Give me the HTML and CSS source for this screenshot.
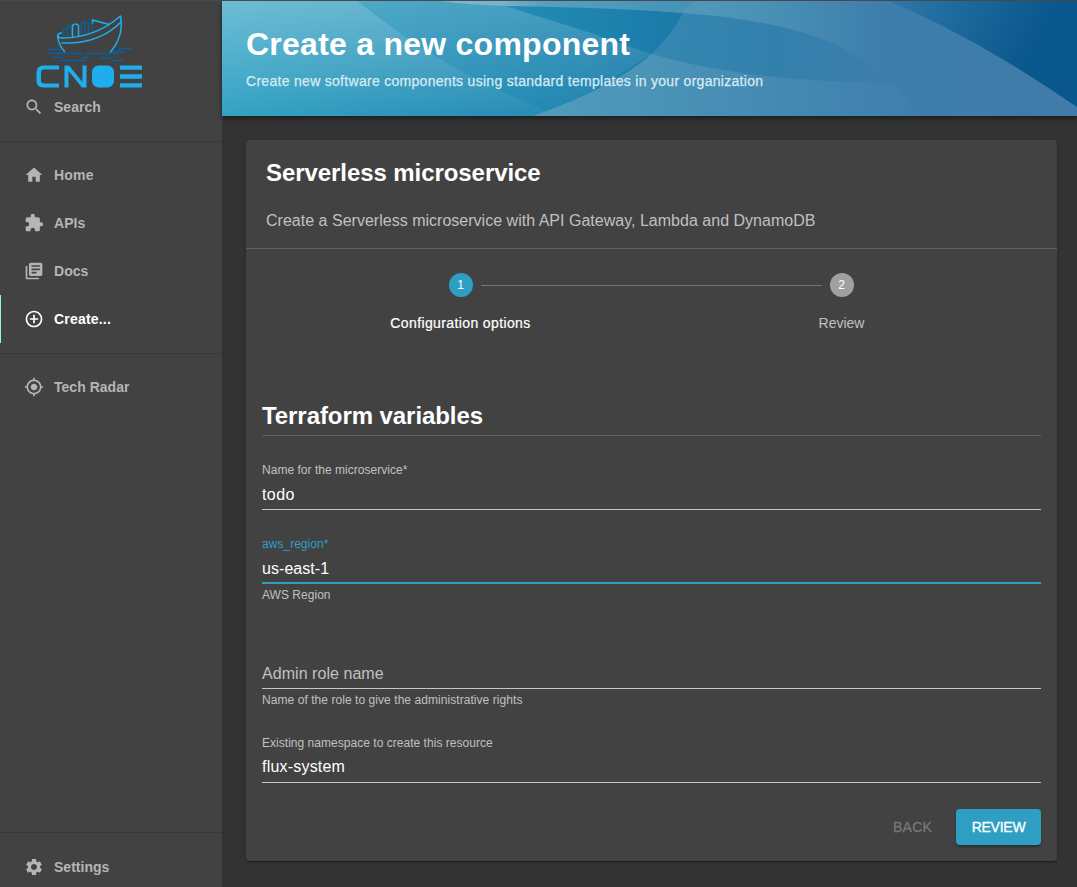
FILE: index.html
```
<!DOCTYPE html>
<html lang="en">
<head>
<meta charset="utf-8">
<title>Create a new component</title>
<link rel="stylesheet" href="styles.css">
</head>
<body>
<div class="app">
  <nav class="sidebar">
    <svg class="logo" width="110" height="76" viewBox="0 0 110 76" fill="none">
      <g stroke="#07619e" stroke-width="1.3">
        <path d="M11 34.500h14M13 38.500h34M51 38.500h32M16 42.500h11.500M23 45.500h27.500M45.500 42.500h7.500M64 43h13M82 33.500h13.500M75 36.500h13M76 45.500h11"/>
        <path d="M27.500 21v-7h3.500M31.500 21v-10.500h3.500V21M45.500 19V8.500l3-2 4 2V18M49 7v12M52.500 8l4 2v7"/>
      </g>
      <g stroke="#1eaeee" stroke-width="1.5" stroke-linejoin="round" stroke-linecap="round">
        <path d="M28.500 36.500C23.500 31 22 26 21.500 20.500q1-2.500 4-2.500M21.500 20.500q1 2.500 4.500 2.500c20 0 40-6 58.500-22 2.500 14-.5 25-10 36M26 28c22 1 43-5 59-21M36.500 22V10.500q3-3 6 0V21M56.500 8V5l17 4.500"/>
      </g>
      <g fill="#1eaeee">
        <path d="M23 50.500H7.500Q0.500 50.500 0.500 57.500V65.500Q0.500 72.500 7.500 72.500H23V68.500H8Q5 68.500 5 65.500V57.500Q5 54.500 8 54.500H23Z"/>
        <path d="M28.500 72.500v-22h4.500l13.500 16.500v-16.500h4v22h-4.500L32.500 56v16.500Z"/>
        <rect x="56" y="50.500" width="22" height="22" rx="6.500"/>
        <path d="M84 50.500h22v4.300H84zM84 59.300h22v4.400H84zM84 68.200h22v4.300H84z"/>
      </g>
    </svg>
    <a class="item search"><svg class="icon" viewBox="0 0 24 24"><path d="M15.500 14h-.79l-.28-.27C15.410 12.590 16 11.110 16 9.500 16 5.910 13.090 3 9.500 3S3 5.910 3 9.500 5.910 16 9.500 16c1.610 0 3.090-.59 4.230-1.570l.27.28v.79l5 4.990L20.490 19l-4.990-5zm-6 0C7.010 14 5 11.990 5 9.500S7.010 5 9.500 5 14 7.010 14 9.500 11.990 14 9.500 14z"/></svg><span class="tight">Search</span></a>
    <hr class="rule first">
    <a class="item"><svg class="icon" viewBox="0 0 24 24"><path d="M10 20v-6h4v6h5v-8h3L12 3 2 12h3v8z"/></svg><span>Home</span></a>
    <a class="item"><svg class="icon" viewBox="0 0 24 24"><path d="M20.500 11H19V7c0-1.100-.9-2-2-2h-4V3.500C13 2.120 11.880 1 10.500 1S8 2.120 8 3.500V5H4c-1.100 0-1.990.9-1.990 2v3.800H3.500c1.490 0 2.700 1.210 2.700 2.700s-1.210 2.700-2.700 2.700H2V20c0 1.100.9 2 2 2h3.800v-1.500c0-1.490 1.210-2.700 2.700-2.700 1.490 0 2.700 1.210 2.700 2.700V22H17c1.100 0 2-.9 2-2v-4h1.500c1.380 0 2.500-1.120 2.500-2.500S21.880 11 20.500 11z"/></svg><span class="tight">APIs</span></a>
    <a class="item"><svg class="icon" viewBox="0 0 24 24"><path d="M4 6H2v14c0 1.100.9 2 2 2h14v-2H4V6zm16-4H8c-1.100 0-2 .9-2 2v12c0 1.100.9 2 2 2h12c1.100 0 2-.9 2-2V4c0-1.100-.9-2-2-2zm-1 9H9V9h10v2zm-4 4H9v-2h6v2zm4-8H9V5h10v2z"/></svg><span class="tight">Docs</span></a>
    <a class="item active"><svg class="icon" viewBox="0 0 24 24"><path d="M13 7h-2v4H7v2h4v4h2v-4h4v-2h-4V7zm-1-5C6.480 2 2 6.480 2 12s4.480 10 10 10 10-4.480 10-10S17.520 2 12 2zm0 18c-4.410 0-8-3.590-8-8s3.590-8 8-8 8 3.590 8 8-3.590 8-8 8z"/></svg><span>Create...</span></a>
    <hr class="rule second">
    <a class="item"><svg class="icon" viewBox="0 0 24 24"><path d="M12 8c-2.210 0-4 1.790-4 4s1.790 4 4 4 4-1.790 4-4-1.790-4-4-4zm8.940 3c-.46-4.170-3.770-7.480-7.940-7.940V1h-2v2.060C6.830 3.520 3.520 6.830 3.060 11H1v2h2.060c.46 4.170 3.770 7.480 7.940 7.940V23h2v-2.060c4.170-.46 7.480-3.770 7.940-7.940H23v-2h-2.060zM12 19c-3.870 0-7-3.130-7-7s3.130-7 7-7 7 3.130 7 7-3.130 7-7 7z"/></svg><span class="tight">Tech Radar</span></a>
    <div class="spacer"></div>
    <hr class="rule third">
    <a class="item settings"><svg class="icon" viewBox="0 0 24 24"><path d="M19.140 12.940c.04-.3.06-.61.06-.94 0-.32-.02-.64-.07-.94l2.030-1.580c.18-.14.23-.41.12-.61l-1.920-3.320c-.12-.22-.37-.29-.59-.22l-2.390.96c-.5-.38-1.030-.7-1.620-.94l-.36-2.540c-.04-.24-.24-.41-.48-.41h-3.840c-.24 0-.43.17-.47.41l-.36 2.540c-.59.24-1.130.57-1.620.94l-2.390-.96c-.22-.08-.47 0-.59.22L2.740 8.870c-.12.21-.08.47.12.61l2.030 1.580c-.05.3-.09.63-.09.94s.02.64.07.94l-2.030 1.580c-.18.14-.23.41-.12.61l1.920 3.320c.12.22.37.29.59.22l2.390-.96c.5.38 1.030.7 1.620.94l.36 2.540c.05.24.24.41.48.41h3.840c.24 0 .44-.17.47-.41l.36-2.540c.59-.24 1.130-.56 1.620-.94l2.390.96c.22.08.47 0 .59-.22l1.920-3.320c.12-.22.07-.47-.12-.61l-2.010-1.580zM12 15.600c-1.980 0-3.600-1.620-3.600-3.600s1.620-3.600 3.600-3.600 3.600 1.620 3.600 3.600-1.620 3.600-3.600 3.600z"/></svg><span class="tight">Settings</span></a>
  </nav>
  <main class="main">
    <header class="header">
      <svg class="waves" viewBox="0 0 855 115" preserveAspectRatio="none">
        <defs>
          <linearGradient id="base" gradientUnits="userSpaceOnUse" x1="0" y1="60" x2="500" y2="60">
            <stop offset="0" stop-color="#2da0c3"/><stop offset=".7" stop-color="#2086b0"/><stop offset="1" stop-color="#1875a5"/>
          </linearGradient>
          <linearGradient id="down" gradientUnits="userSpaceOnUse" x1="0" y1="0" x2="0" y2="115"><stop offset="0" stop-color="#fff" stop-opacity=".18"/><stop offset="1" stop-color="#fff" stop-opacity="0"/></linearGradient>
          <linearGradient id="left" x1="0" y1="0" x2="0" y2="1"><stop offset="0" stop-color="#fff" stop-opacity=".15"/><stop offset="1" stop-color="#fff" stop-opacity=".03"/></linearGradient>
          <linearGradient id="strip" gradientUnits="userSpaceOnUse" x1="217" y1="0" x2="471" y2="0"><stop offset="0" stop-color="#78b8d0"/><stop offset=".25" stop-color="#78b3cc"/><stop offset=".4" stop-color="#56a1c0"/><stop offset="1" stop-color="#4492b9"/></linearGradient>
          <linearGradient id="band" gradientUnits="userSpaceOnUse" x1="420" y1="0" x2="855" y2="0"><stop offset="0" stop-color="#559dbb"/><stop offset=".3" stop-color="#4a90b5"/><stop offset=".55" stop-color="#3d7eac"/><stop offset="1" stop-color="#417ba9"/></linearGradient>
          <linearGradient id="low" gradientUnits="userSpaceOnUse" x1="311" y1="0" x2="680" y2="0"><stop offset="0" stop-color="#519cbc"/><stop offset=".6" stop-color="#468bb3"/><stop offset="1" stop-color="#3f80ad"/></linearGradient>
          <linearGradient id="lens" gradientUnits="userSpaceOnUse" x1="430" y1="50" x2="665" y2="80"><stop offset="0" stop-color="#3488b1"/><stop offset=".5" stop-color="#3380ad"/><stop offset="1" stop-color="#3d7eac"/></linearGradient>
          <linearGradient id="corner" gradientUnits="userSpaceOnUse" x1="666" y1="0" x2="805" y2="65"><stop offset="0" stop-color="#2e78a8"/><stop offset="1" stop-color="#0a578d"/></linearGradient>
        </defs>
        <path fill="url(#base)" d="M0 0h855v115H0z"/>
        <path fill="url(#left)" d="M0 0H135C195 47 255 85 340 115H0z"/>
        <path fill="url(#down)" d="M0 0H268L378 35Q405 45 430 53L390 78Q355 99 311 115H0z"/>
        <path fill="url(#corner)" d="M660 0h195v115H660z"/>
        <path fill="url(#band)" d="M471 0H666C750 35 815 79 855 106V115H430V7z"/>
        <path fill="url(#lens)" d="M430 53Q451 32 461 12C580 21 630 45 674 83L655 88 430 70z"/>
        <path fill="url(#low)" d="M311 115Q390 87 430 53C500 74 580 80 671 83Q684 94 692 115z"/>
        <path fill="url(#base)" d="M418 9Q442 10 461 12 451 32 430 53L418 49z"/>
        <path fill="url(#strip)" d="M143 0H471L461 12Q420 8 311 5.500 255 5 217 0z"/>
      </svg>
      <h1>Create a new component</h1>
      <p>Create new software components using standard templates in your organization</p>
    </header>
    <section class="card">
      <div class="card-head">
        <h2>Serverless microservice</h2>
        <p>Create a Serverless microservice with API Gateway, Lambda and DynamoDB</p>
      </div>
      <div class="stepper">
        <div class="step on"><b>1</b><span>Configuration options</span></div>
        <i class="line"></i>
        <div class="step"><b>2</b><span>Review</span></div>
      </div>
      <div class="form">
        <h2 class="form-title">Terraform variables</h2>
        <div class="field name"><label>Name for the microservice*</label><div class="value todo">todo</div></div>
        <div class="field region"><label>aws_region*</label><div class="value">us-east-1</div><small>AWS Region</small></div>
        <div class="field role"><div class="value">Admin role name</div><small class="hint">Name of the role to give the administrative rights</small></div>
        <div class="field space"><label>Existing namespace to create this resource</label><div class="value">flux-system</div></div>
        <div class="actions"><button class="back">BACK</button><button class="review">REVIEW</button></div>
      </div>
    </section>
  </main>
</div>
</body>
</html>
```
FILE: styles.css
```
* { box-sizing: border-box; }
body { margin: 0; background: #333; color: #fff; font-family: "Liberation Sans", Arial, sans-serif; }
h1, h2, p { margin: 0; }
.app { display: flex; height: 887px; border-top: 1px solid #494949; overflow: hidden; }
.sidebar { width: 222px; background: #424242; display: flex; flex-direction: column; }
.logo { display: block; margin: 14px 0 0 36px; flex: none; }
.item { display: flex; align-items: center; flex: none; height: 48px; padding-left: 24px; gap: 10px; color: #b5b5b5; font-size: 14px; font-weight: 700; letter-spacing: .2px; line-height: 20px; border-left: 0 solid #9bf0e1; }
.tight { letter-spacing: .02px; }
.item.search { height: 32px; }
.icon { width: 20px; height: 20px; fill: currentColor; }
.item.active { color: #fff; border-left-width: 1px; padding-left: 23px; }
.rule { width: 100%; height: 1px; margin: 0; border: 0; background: #383838; flex: none; }
.first { margin: 18px 0 9px; }
.second { margin: 10px 0 9px; }
.spacer { flex: 1; }
.third { margin-bottom: 10px; }
.settings { height: 44px; padding-top: 4px; }
.main { flex: 1; }
.header { position: relative; height: 115px; padding: 24px 24px 0; box-shadow: 0 2px 5px rgba(0,0,0,.5); }
.waves { position: absolute; left: 0; top: 0; width: 100%; height: 100%; }
.header h1, .header p { position: relative; white-space: nowrap; }
.header h1 { font-size: 32px; line-height: 38px; letter-spacing: .25px; }
.header p { margin-top: 8px; font-size: 14px; line-height: 20px; color: #d7ebf3; letter-spacing: .295px; -webkit-text-stroke: .25px #d7ebf3; }
.card { margin: 24px 20px 0 24px; height: 721px; background: #424242; border-radius: 4px; box-shadow: 0 2px 1px -1px rgba(0,0,0,.3), 0 1px 3px rgba(0,0,0,.2); }
.card-head { height: 109px; padding: 18px 20px 0; border-bottom: 1px solid #616161; }
h2 { font-size: 24px; line-height: 29px; letter-spacing: -.07px; }
.card-head p { margin-top: 22px; font-size: 16px; line-height: 24px; color: #c0c0c0; white-space: nowrap; letter-spacing: .015px; }
.stepper { display: flex; padding-top: 24px; height: 134px; }
.step { width: 141px; margin-left: 144px; display: flex; flex-direction: column; align-items: center; color: #c0c0c0; font-size: 14px; white-space: nowrap; }
.step b { width: 24px; height: 24px; border-radius: 50%; background: #a0a0a0; color: #fff; font-size: 12px; font-weight: 400; line-height: 24px; text-align: center; }
.step span { margin-top: 16px; line-height: 20px; }
.on { color: #fff; -webkit-text-stroke: .2px #fff; }
.on span { letter-spacing: .38px; }
.on b { background: #2e9fc3; -webkit-text-stroke: 0; }
.line { width: 341px; height: 1px; margin: 12px -195px 0 -50px; background: #757575; }
.form { padding: 18px 16px 0; }
.form-title { height: 35px; border-bottom: 1px solid #616161; line-height: 29px; }
.field { display: flex; flex-direction: column; }
label, small { font-size: 12px; line-height: 16px; color: #c0c0c0; letter-spacing: .03px; }
.value { font-size: 16px; line-height: 20px; border-bottom: 1px solid #c6c6c6; height: 25px; margin-top: 7px; letter-spacing: .05px; }
.todo { letter-spacing: .4px; }
.name { margin-top: 26px; }
.region { margin-top: 26px; }
.region label { color: #2e9fc3; }
.region .value { border-bottom: 2px solid #2e9fc3; }
small { margin-top: 3px; }
.hint { letter-spacing: .06px; }
.role { margin-top: 54px; }
.role .value { color: #c0c0c0; }
.space { margin-top: 27px; }
.space .value { height: 26px; margin-top: 6px; letter-spacing: .2px; }
.actions { display: flex; justify-content: flex-end; gap: 8px; margin-top: 26px; }
button { font: 14px/36px "Liberation Sans", Arial, sans-serif; height: 36px; padding: 0 16px; border: 0; border-radius: 4px; background: none; color: #777; -webkit-text-stroke: .3px; }
.back { letter-spacing: .2px; }
.review { width: 85px; padding: 0 14px; letter-spacing: -.25px; background: #2e9fc3; color: #fff; box-shadow: 0 2px 2px rgba(0,0,0,.3); }
```
